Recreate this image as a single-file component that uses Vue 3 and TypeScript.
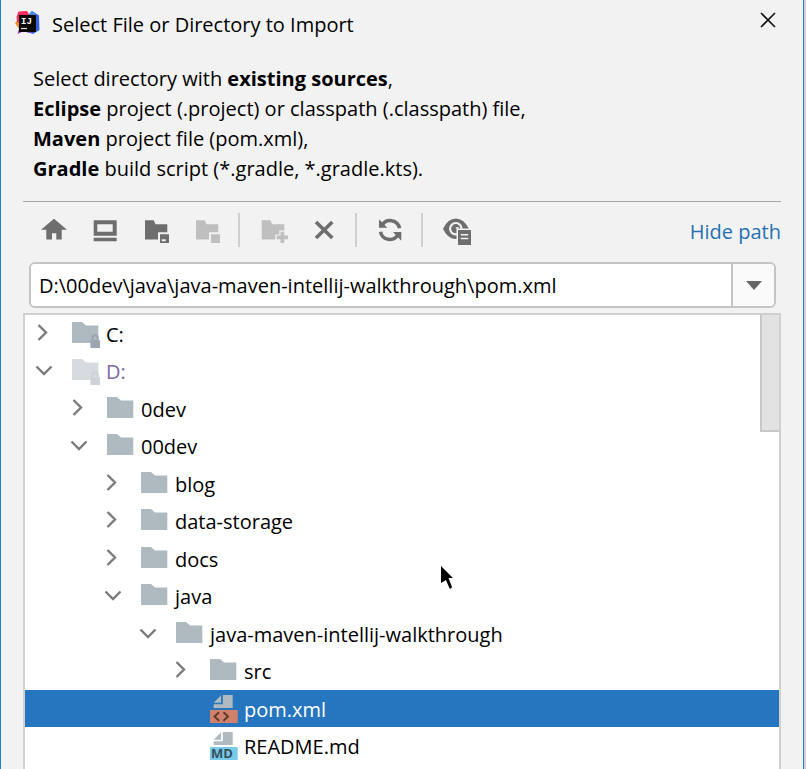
<script setup lang="ts">
import { ref } from 'vue'

type Kind = 'drive' | 'folder' | 'xml' | 'md'

interface Entry {
  name: string
  depth: number
  kind: Kind
  state?: 'open' | 'closed'
  muted?: boolean
}

const entries: Entry[] = [
  { name: 'C:', depth: 0, kind: 'drive', state: 'closed' },
  { name: 'D:', depth: 0, kind: 'drive', state: 'open', muted: true },
  { name: '0dev', depth: 1, kind: 'folder', state: 'closed' },
  { name: '00dev', depth: 1, kind: 'folder', state: 'open' },
  { name: 'blog', depth: 2, kind: 'folder', state: 'closed' },
  { name: 'data-storage', depth: 2, kind: 'folder', state: 'closed' },
  { name: 'docs', depth: 2, kind: 'folder', state: 'closed' },
  { name: 'java', depth: 2, kind: 'folder', state: 'open' },
  { name: 'java-maven-intellij-walkthrough', depth: 3, kind: 'folder', state: 'open' },
  { name: 'src', depth: 4, kind: 'folder', state: 'closed' },
  { name: 'pom.xml', depth: 4, kind: 'xml' },
  { name: 'README.md', depth: 4, kind: 'md' },
]

const selected = ref('pom.xml')
const path = ref('D:\\00dev\\java\\java-maven-intellij-walkthrough\\pom.xml')

const indent = (depth: number) => ({ paddingLeft: `${Math.round(depth * 34.5)}px` })
</script>

<template>
  <div class="screen">
    <main class="dialog">
      <header class="titlebar">
        <svg class="logo" viewBox="0 0 26 26" aria-hidden="true">
          <path d="M14 5 17 1 24 5.500 24.500 20 18 24 9 21z" fill="#3a62dc" />
          <path d="M17 1 21 4 17 8 13 5z" fill="#3f8cf0" />
          <path d="M0 13 4 9 8 18 4 19z" fill="#f98a1c" />
          <path d="M2.500 24 4.500 17 12 16 16 23 8 21.500z" fill="#9a38d4" />
          <path d="M1.500 7 3.500 1.500 12 1 15 6 8 14 2 12z" fill="#fb2d5e" />
          <rect x="4" y="5" width="17" height="17" fill="#0b0808" />
          <text x="6" y="14">IJ</text>
          <path d="M6 18.500h6" stroke="#ddd" stroke-width="1.200" />
        </svg>
        <h1>Select File or Directory to Import</h1>
        <button class="close" type="button" aria-label="Close">
          <svg viewBox="0 0 16 16"><path d="M1 1 15 15M15 1 1 15" fill="none" stroke="#111" stroke-width="1.600" /></svg>
        </button>
      </header>

      <p class="hint">
        Select directory with <b>existing sources</b>,<br />
        <b>Eclipse</b> project (.project) or classpath (.classpath) file,<br />
        <b>Maven</b> project file (pom.xml),<br />
        <b>Gradle</b> build script (*.gradle, *.gradle.kts).
      </p>

      <div class="toolbar">
        <button type="button" aria-label="Home directory">
          <svg viewBox="0 0 30 30"><path d="M15 2.700 28 13.700H22.700V23.600H17.300V17.300H13V23.600H7.300V13.700H2z" /></svg>
        </button>
        <button type="button" aria-label="Desktop directory">
          <svg viewBox="0 0 30 30"><path fill-rule="evenodd" d="M3.700 4.300h23v15.400h-23zM7.300 8.300v7.400h15.400V8.300zM3.700 21.700h23v3.600h-23z" /></svg>
        </button>
        <button type="button" aria-label="Project directory">
          <svg viewBox="0 0 30 30"><path fill-rule="evenodd" d="M4 4.300h8.700l1.800 4h11.800v8H17v7.300H4zM19 18.300h9V27h-9zM20.700 23.300v2h4v-2z" /></svg>
        </button>
        <button type="button" aria-label="Module directory" disabled>
          <svg viewBox="0 0 30 30"><path d="M4 4.300h8.700l1.800 4h11.800v8H17v7.300H4zM19 18.300h9V27h-9z" /></svg>
        </button>
        <i class="sep"></i>
        <button type="button" aria-label="New folder" disabled>
          <svg viewBox="0 0 30 30"><path d="M3.700 4.300h8.700l1.800 4h12.100v6.200h-5v4h-4v5.100H3.700zM22.500 15.700h3.700v3.800H30v3.700h-3.800V27h-3.700v-3.800h-3.800v-3.700h3.800z" /></svg>
        </button>
        <button type="button" aria-label="Delete">
          <svg viewBox="0 0 30 30"><path d="M7 6 23.300 22M23.300 6 7 22" fill="none" stroke="#6e6e6e" stroke-width="3.600" /></svg>
        </button>
        <i class="sep"></i>
        <button type="button" aria-label="Refresh">
          <svg viewBox="0 0 30 30">
            <path d="M7 9.500A9.400 9.400 0 0 1 24.500 12.300M23 18.500A9.400 9.400 0 0 1 5.500 15.700" fill="none" stroke="#6e6e6e" stroke-width="3.600" />
            <path d="M4 3.300V11.700H12.300zM26.300 24.700V16H18z" />
          </svg>
        </button>
        <i class="sep"></i>
        <button type="button" aria-label="Show hidden files">
          <svg viewBox="0 0 30 30">
            <path d="M2 12.700Q7 2.500 14.800 2.500T28 12.700Q23 23 14.800 23T2 12.700z" />
            <circle cx="14.800" cy="12.700" r="5.700" fill="none" stroke="#f2f2f2" stroke-width="2.200" />
            <path d="M14.800 12.700v-1.500h3v1.500z" fill="#f2f2f2" />
            <path d="M15.500 12.500H30V29H15.500z" fill="#f2f2f2" />
            <path fill-rule="evenodd" d="M17 14h13v15H17zM19.700 18v1.500h7.600V18zM19.700 21.700v1.500h7.600v-1.500z" />
          </svg>
        </button>
        <a class="toggle" href="#">Hide path</a>
      </div>

      <div class="pathbox">
        <input v-model="path" type="text" aria-label="Path" spellcheck="false" />
        <button type="button" aria-label="Recent paths">
          <svg viewBox="0 0 16 9"><path d="M0 0H16L8 9z" fill="#666" /></svg>
        </button>
      </div>

      <div class="tree">
        <ul role="tree" aria-label="Files">
          <li
            v-for="entry in entries"
            :key="entry.name"
            role="treeitem"
            :aria-level="entry.depth + 1"
            :aria-selected="entry.name === selected"
            :class="{ selected: entry.name === selected, muted: entry.muted }"
            @click="selected = entry.name"
          >
            <div class="row" :style="indent(entry.depth)">
              <svg class="icon arrow" viewBox="0 0 30 30" aria-hidden="true">
                <path v-if="entry.state === 'closed'" d="M9.500 6 17 13.500 9.500 21" />
                <path v-if="entry.state === 'open'" d="M7.500 10.500 15 18 22.500 10.500" />
              </svg>
              <svg class="icon" viewBox="0 0 30 30" aria-hidden="true">
                <g v-if="entry.kind === 'drive' || entry.kind === 'folder'" class="folder">
                  <path d="M2 3h10l4 3.500h12.300V24H2z" fill="#aeb9c0" />
                  <g v-if="entry.kind === 'drive'">
                    <path d="M22.500 21.500V19q0-2.700 2.600-2.700T27.700 19v2.500" fill="none" stroke="#9aa7b0" stroke-width="2" />
                    <path d="M20.400 21.300H30V29h-9.600z" fill="#9aa7b0" />
                  </g>
                </g>
                <g v-else>
                  <path d="M5.700 8.700 13 1.300V8.700zM14.800 1H24.700V14H5.700V10.300H14.800z" fill="#aeb9c0" />
                  <path d="M2 16H29.700V29H2z" :fill="entry.kind === 'xml' ? '#d28069' : '#77cbe9'" />
                  <path v-if="entry.kind === 'xml'" d="M11 18.300 6.500 22.500 11 26.700M15.500 18.300 20 22.500 15.500 26.700" fill="none" stroke="#5a382e" stroke-width="1.900" />
                  <text v-else x="3" y="27">MD</text>
                </g>
              </svg>
              <span class="name">{{ entry.name }}</span>
            </div>
          </li>
        </ul>
        <div class="thumb"></div>
      </div>

      <svg class="cursor" viewBox="0 0 12 23" aria-hidden="true">
        <path d="M0 0 12 12H7.500L11 21 10 22.500H8.500L5 14 0 17z" />
      </svg>
    </main>
    <div class="backdrop"></div>
  </div>
</template>

<style>
body {
  margin: 0;
  background: #f2f2f2;
}
</style>

<style scoped>
.screen {
  display: flex;
  min-height: 100vh;
  font: 20px/30px 'Open Sans', 'Noto Sans', sans-serif;
  color: #000;
}
.dialog {
  position: relative;
  flex: 1;
  min-width: 0;
  display: flex;
  flex-direction: column;
  box-sizing: border-box;
  padding: 0 22px;
  background: #f2f2f2;
  border: solid #1a80d4;
  border-width: 0 1px;
}
.backdrop {
  width: 2px;
  background: #d2d0d3;
}
button {
  display: flex;
  align-items: center;
  justify-content: center;
  padding: 0;
  border: 0;
  background: none;
}
svg {
  display: block;
}
.titlebar {
  display: flex;
  align-items: center;
  height: 50px;
  margin: 0 5px 0 -8px;
}
.logo {
  width: 26px;
  height: 26px;
  margin-bottom: 4px;
}
.logo text {
  font: 700 9px/1 'Liberation Mono', monospace;
  fill: #fff;
}
h1 {
  flex: 1;
  margin: 0 0 0 11px;
  font-size: 20px;
  font-weight: 400;
}
.close {
  margin-bottom: 10px;
}
.close svg {
  width: 16px;
  height: 16px;
}
.hint {
  margin: 14px 0 17px 10px;
}
.toolbar {
  display: flex;
  align-items: center;
  height: 60px;
  padding-left: 16px;
  border-top: 1px solid #a6a6a6;
}
.toolbar button {
  width: 30px;
  height: 30px;
  margin-bottom: 2px;
}
.toolbar button + button {
  margin-left: 21px;
}
.toolbar button svg {
  width: 30px;
  height: 30px;
  fill: #6e6e6e;
}
.toolbar button:disabled svg {
  fill: #bfbfbf;
}
.sep {
  width: 2px;
  height: 34px;
  margin: 0 18px 4px 16px;
  background: #cfcfcf;
}
.toggle {
  margin-left: auto;
  color: #2470b3;
  text-decoration: none;
}
.pathbox {
  display: flex;
  height: 42px;
  margin: 0 5px 5px 6px;
  border: 2px solid #c4c4c4;
  border-radius: 6px;
  background: #fff;
  overflow: hidden;
}
.pathbox input {
  flex: 1;
  min-width: 0;
  padding: 2px 8px 0;
  border: 0;
  outline: 0;
  background: #fff;
  font: inherit;
  color: inherit;
}
.pathbox button {
  width: 43px;
  border-left: 2px solid #c4c4c4;
  background: #fafafa;
}
.pathbox button svg {
  width: 16px;
  height: 9px;
}
.tree {
  position: relative;
  flex: 1;
  border: 2px solid #d0d0d0;
  border-bottom: 0;
  background: #fff;
}
ul {
  display: grid;
  grid-auto-rows: 37px 38px;
  margin: 0;
  padding: 0;
  list-style: none;
}
.row {
  display: flex;
  align-items: center;
  height: 100%;
  margin-left: 4px;
}
.icon {
  flex: none;
  width: 30px;
  height: 30px;
  margin-right: 6px;
}
.arrow {
  margin-right: 11px;
}
.arrow path {
  fill: none;
  stroke: #7b7b7b;
  stroke-width: 2.4;
}
.icon text {
  font: 700 13px 'Open Sans', sans-serif;
  fill: #35505c;
}
.name {
  padding-top: 2px;
  white-space: nowrap;
}
.selected {
  background: #2675bf;
  color: #fff;
}
.muted {
  color: #7a68a8;
}
.muted .folder {
  opacity: 0.5;
}
.thumb {
  position: absolute;
  top: 0;
  right: 0;
  box-sizing: border-box;
  width: 19px;
  height: 117px;
  border: solid #c8c8c8;
  border-width: 0 0 2px 2px;
  background: #e2e2e2;
}
.cursor {
  position: absolute;
  left: 440px;
  top: 566px;
  width: 12px;
  height: 23px;
}
</style>
